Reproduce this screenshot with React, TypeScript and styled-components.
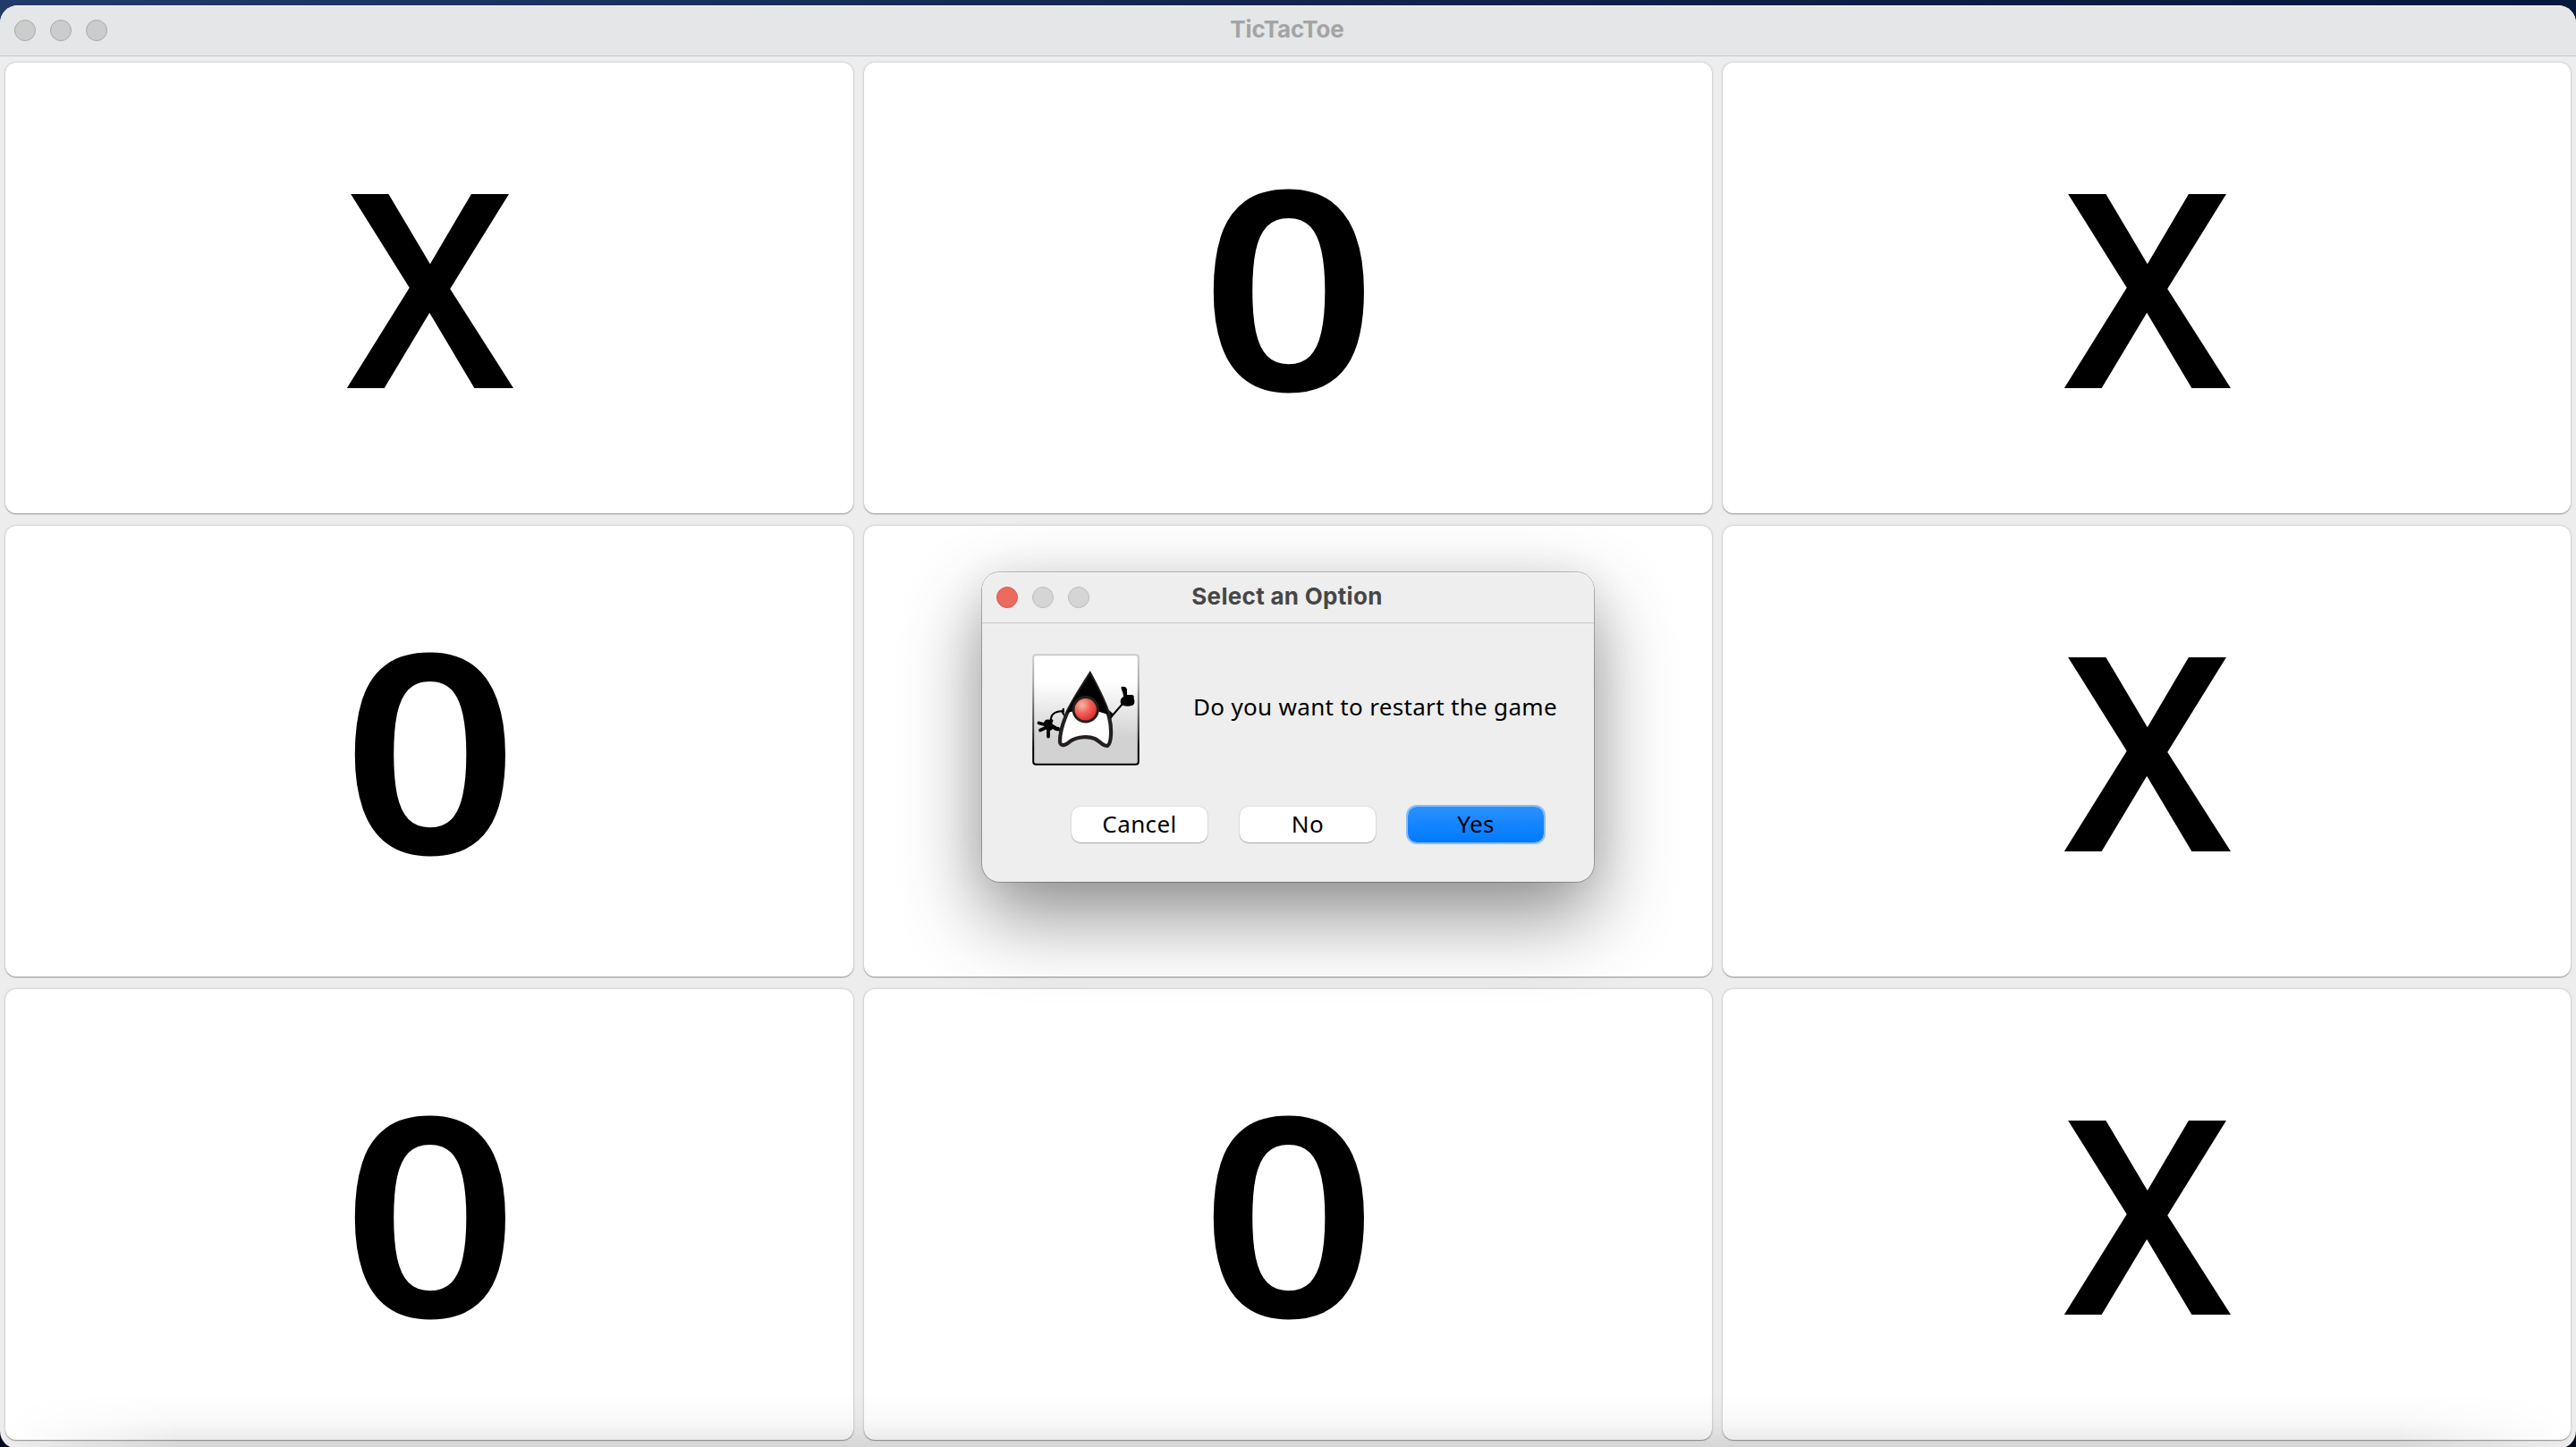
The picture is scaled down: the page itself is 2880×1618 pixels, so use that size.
import React from 'react';
import styled, { createGlobalStyle, css } from 'styled-components';

const Global = createGlobalStyle`
  * { box-sizing: border-box; }
  html, body { margin: 0; padding: 0; overflow: hidden; }
`;

const Desktop = styled.div`
  position: relative;
  width: 2880px;
  height: 1618px;
  padding-top: 6px;
  overflow: hidden;
  background: linear-gradient(90deg, #223a68 0, #1d3462 500px, #14244f 1400px, #06163c 2880px);
  &::before {
    content: '';
    position: absolute;
    inset: 800px 0 0 0;
    background: #050a1c;
  }
`;

const MainWindow = styled.main`
  position: relative;
  display: flex;
  flex-direction: column;
  height: 1614px;
  border-radius: 20px;
  overflow: hidden;
  background: #ededed;
`;

const TitleBar = styled.header<{ $active?: boolean }>`
  position: relative;
  flex: none;
  display: grid;
  grid-template-columns: 1fr auto 1fr;
  align-items: center;
  height: 57px;
  padding: 0 16px;
  border-bottom: 1px solid #c6c7c7;
  background: ${p => (p.$active ? '#eeeeee' : '#e5e6e7')};
  box-shadow: inset 0 1px 0 #f9f9fa;
`;

const Lights = styled.div`
  display: flex;
  gap: 16px;
`;

const Light = styled.span<{ $fill: string; $ring: string }>`
  width: 24px;
  height: 24px;
  border-radius: 50%;
  background: ${p => p.$fill};
  border: 1px solid ${p => p.$ring};
`;

const Title = styled.h1<{ $color: string; $tracking: number }>`
  margin: 0 2px 2px 0;
  font: 700 26px/30px Inter, 'Liberation Sans', sans-serif;
  letter-spacing: ${p => p.$tracking}px;
  white-space: nowrap;
  color: ${p => p.$color};
`;

const Board = styled.section`
  flex: 1;
  display: grid;
  grid-template-columns: repeat(3, 948px);
  grid-template-rows: repeat(3, 504px);
  gap: 14px 12px;
  padding: 7px 6px;
`;

const Cell = styled.button`
  display: flex;
  align-items: center;
  justify-content: center;
  padding: 0;
  border: 0;
  border-radius: 12px;
  background: #ffffff;
  box-shadow: 0 1px 1px rgba(0, 0, 0, 0.3), 0 0 3px rgba(0, 0, 0, 0.22);
`;

const Mark = styled.span<{ $mark: string }>`
  display: block;
  font: 600 304px/304px 'Noto Sans', 'Open Sans', sans-serif;
  color: #000;
  transform: ${p => (p.$mark === 'X' ? 'translate(1px, -6px) scaleX(0.97)' : 'translate(1px, -6px) scale(1.13, 1.02)')};
`;

const DockShade = styled.div`
  position: absolute;
  left: 0;
  right: 0;
  bottom: 0;
  height: 60px;
  pointer-events: none;
  background: linear-gradient(180deg, rgba(0, 0, 0, 0) 0, rgba(0, 0, 0, 0.025) 28px, rgba(0, 0, 0, 0.1) 60px);
  mask-image: linear-gradient(90deg, transparent 0, #000 200px, #000 2680px, transparent 2880px);
`;

const Dialog = styled.div`
  position: absolute;
  left: 1098px;
  top: 640px;
  width: 684px;
  height: 346px;
  display: flex;
  flex-direction: column;
  border-radius: 20px;
  background: #eeeeee;
  box-shadow: 0 0 0 1px rgba(0, 0, 0, 0.25), 0 38px 88px rgba(0, 0, 0, 0.44), 0 0 50px rgba(0, 0, 0, 0.06);
`;

const DialogTitleBar = styled(TitleBar)`
  border-radius: 20px 20px 0 0;
`;

const Message = styled.div`
  display: flex;
  align-items: flex-start;
  padding: 34px 0 0 55px;
  gap: 59px;
`;

const DukeIcon = styled.svg`
  flex: none;
  display: block;
  width: 122px;
  height: 126px;
`;

const MessageText = styled.p`
  margin: 43px 0 0;
  font: 400 26px/32px 'Noto Sans', 'Open Sans', sans-serif;
  letter-spacing: 0.32px;
  white-space: nowrap;
  color: #000;
`;

const Actions = styled.div`
  display: flex;
  gap: 36px;
  margin-top: 45px;
  padding-left: 100px;
`;

const Action = styled.button<{ $primary?: boolean }>`
  width: 152px;
  height: 40px;
  padding: 0 0 3px;
  border: 0;
  border-radius: 10px;
  background: #fff;
  color: #000;
  font: 400 26px/36px 'Noto Sans', 'Open Sans', sans-serif;
  letter-spacing: 0.4px;
  box-shadow: 0 1px 1px rgba(0, 0, 0, 0.25), 0 0 2px rgba(0, 0, 0, 0.2);
  ${p =>
    p.$primary &&
    css`
      background: linear-gradient(180deg, #2a90ff, #007aff);
      box-shadow: 0 0 0 2px #8dbcf0;
    `}
`;

const marks = ['X', '0', 'X', '0', 'X', 'X', '0', '0', 'X'];

const WindowLights = ({ active }: { active?: boolean }) => (
  <Lights>
    <Light $fill={active ? '#ed6a5f' : '#cbcccc'} $ring={active ? '#d85a50' : '#a9aaab'} />
    <Light $fill={active ? '#d5d5d5' : '#cbcccc'} $ring={active ? '#bdbdbd' : '#a9aaab'} />
    <Light $fill={active ? '#d5d5d5' : '#cbcccc'} $ring={active ? '#bdbdbd' : '#a9aaab'} />
  </Lights>
);

const Duke = () => (
  <DukeIcon viewBox="0 0 122 126" aria-hidden="true">
    <defs>
      <linearGradient id="frame" x1="0" y1="0" x2="0" y2="1">
        <stop offset="0" stopColor="#cccccc" />
        <stop offset="0.25" stopColor="#aaaaaa" />
        <stop offset="0.7" stopColor="#333333" />
        <stop offset="0.85" stopColor="#000000" />
      </linearGradient>
      <linearGradient id="panel" x1="0" y1="0" x2="0" y2="1">
        <stop offset="0.25" stopColor="#ffffff" />
        <stop offset="0.75" stopColor="#d2d2d2" />
      </linearGradient>
      <radialGradient id="nose" cx="0.36" cy="0.32" r="0.68">
        <stop offset="0" stopColor="#f8b9a4" />
        <stop offset="0.5" stopColor="#ee6259" />
        <stop offset="1" stopColor="#dd2a25" />
      </radialGradient>
    </defs>
    <rect x="2.2" y="1.2" width="117.6" height="122.6" rx="3" fill="url(#panel)" stroke="url(#frame)" strokeWidth="2" />
    <path d="M37 64C29 64 23 66 22 72L21 77" fill="none" stroke="#000" strokeWidth="2" />
    <path d="M36 61L34 65L36 68Z" fill="#000" stroke="#000" strokeWidth="1.5" />
    <path d="M32 84C27 86 25 80 20 80" fill="none" stroke="#000" strokeWidth="4.500" />
    <g fill="none" stroke="#000" strokeLinecap="round">
      <path d="M18 80L8.500 77.500M18 82L10 85.500M19 83L19 92.500M21 78L22.500 75" strokeWidth="3.800" />
      <path d="M18.500 78L20 81.500" strokeWidth="9" />
    </g>
    <path d="M89 71L102 56" fill="none" stroke="#000" strokeWidth="2" />
    <path d="M88 65L91 68L89 72Z" fill="#000" stroke="#000" strokeWidth="1.500" />
    <path d="M101 57C99 55 99 50 103 48C103 42 99 38 101 37C103 36 107 37 107 40L107 46L113 46C116 47 114 49 115 51C116 54 115 58 112 58C109 59 104 59 101 57Z" fill="#000" />
    <path d="M65.700 23C54 41 43 58 38.500 70C34 81 32 93 32 98C32.500 105 39 102 44 97.500C52 92.500 64 92 71 95C77 98 80 103.500 85 103C89.500 101 90.500 84 87 71C84 58 76 42 65.700 23Z" fill="#fff" stroke="#231f20" strokeWidth="4.200" strokeLinejoin="miter" />
    <path d="M65.700 23C55 40 43 58 39.500 66L49 64L73 64L86 68C84 57 76 42 65.700 23Z" fill="#000" />
    <circle cx="60.700" cy="62.300" r="13.700" fill="url(#nose)" stroke="#231f20" strokeWidth="3" />
  </DukeIcon>
);

export default function App() {
  return (
    <>
      <Global />
      <Desktop>
        <MainWindow>
          <TitleBar>
            <WindowLights />
            <Title $color="#a3a4a5" $tracking={-0.1}>TicTacToe</Title>
          </TitleBar>
          <Board>
            {marks.map((m, i) => (
              <Cell key={i}>{i !== 4 && <Mark $mark={m}>{m}</Mark>}</Cell>
            ))}
          </Board>
          <DockShade />
        </MainWindow>
        <Dialog role="dialog">
          <DialogTitleBar $active>
            <WindowLights active />
            <Title $color="#464646" $tracking={0.3}>Select an Option</Title>
          </DialogTitleBar>
          <Message>
            <Duke />
            <MessageText>Do you want to restart the game</MessageText>
          </Message>
          <Actions>
            <Action>Cancel</Action>
            <Action>No</Action>
            <Action $primary>Yes</Action>
          </Actions>
        </Dialog>
      </Desktop>
    </>
  );
}
